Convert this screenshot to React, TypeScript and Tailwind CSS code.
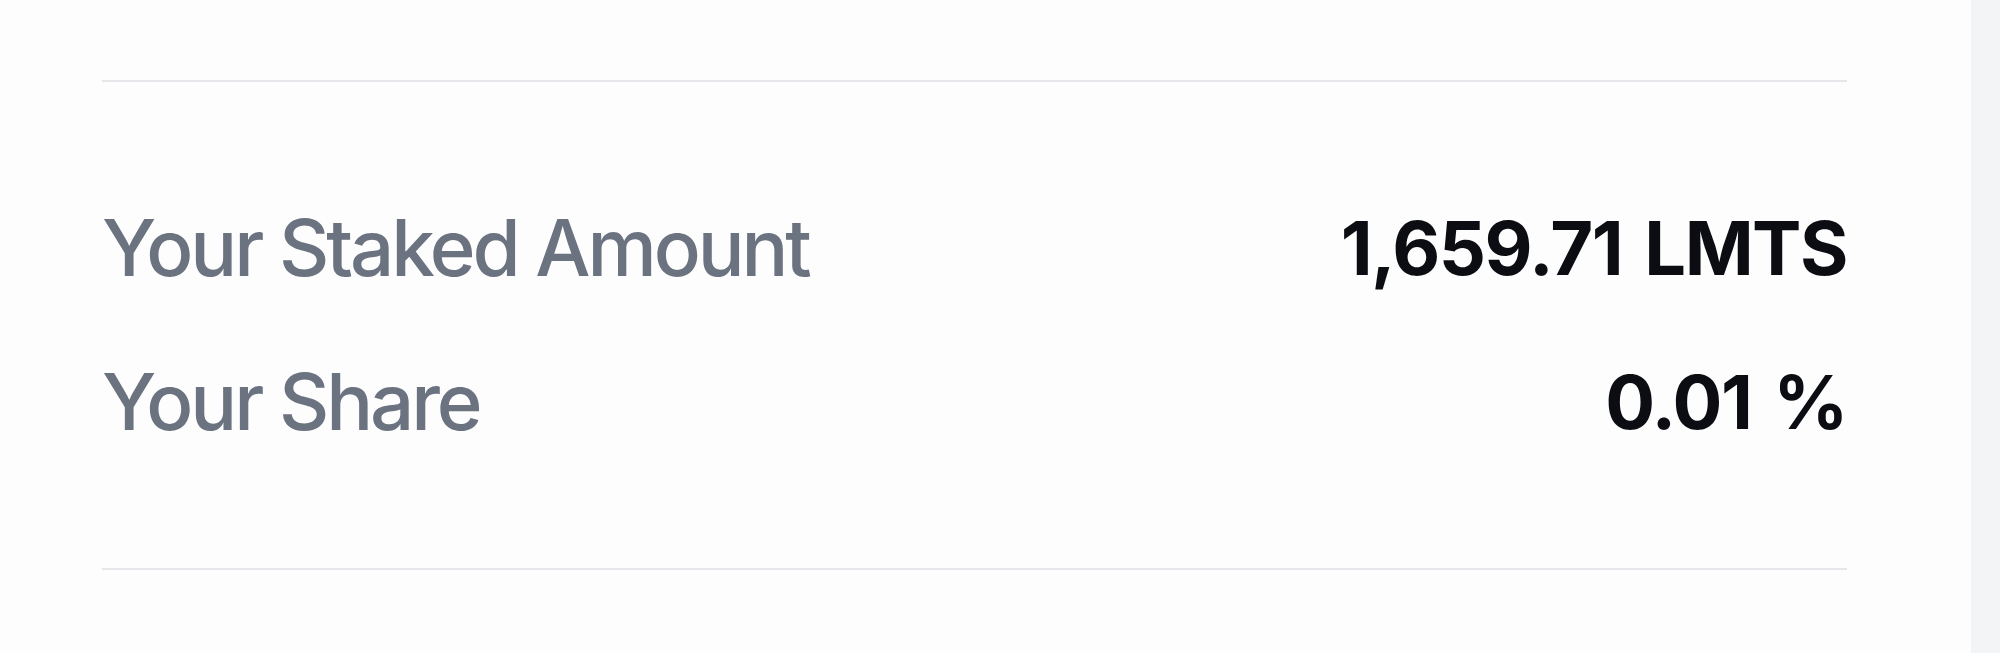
const rows = [
  { label: "Your Staked Amount", value: "1,659.71", unit: "LMTS" },
  { label: "Your Share", value: "0.01", unit: "%" },
];

export default function App() {
  return (
    <div className="flex h-[653px] w-full bg-white font-['Inter','Noto_Sans',sans-serif]">
      <main className="flex-1 bg-[#fdfdfd] pl-[102px] pr-[124px] pt-[80px]">
        <section className="flex flex-col border-y-2 border-[#e6e7ea] py-[89px]">
          {rows.map((r) => (
            <div key={r.label} className="flex h-[154px] items-center justify-between">
              <span className="text-[78px] font-medium leading-none tracking-[-0.04em] text-[#6b7280]">
                {r.label}
              </span>
              <span className="flex items-baseline gap-[22px] text-[74px] font-bold leading-none tracking-[-0.02em] text-[#0b0d12]">
                <span>{r.value}</span>
                <span>{r.unit}</span>
              </span>
            </div>
          ))}
        </section>
      </main>
      <aside className="w-[29px] bg-[#f3f4f6]" />
    </div>
  );
}
